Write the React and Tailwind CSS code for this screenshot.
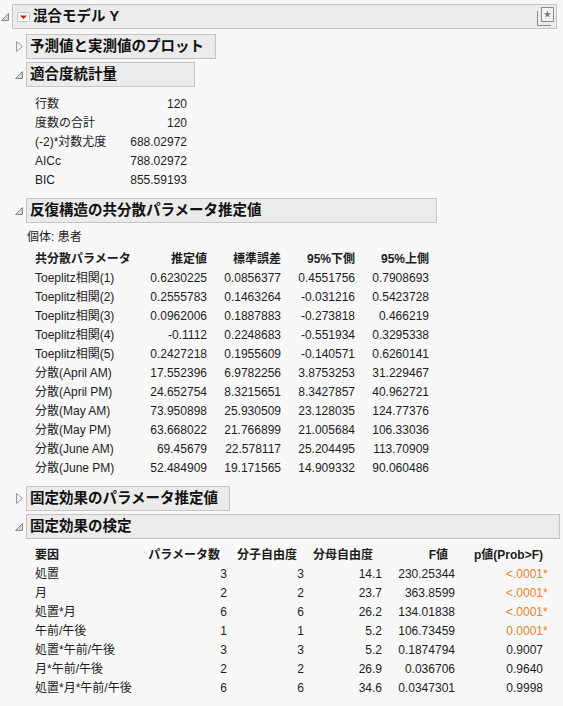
import React from "react";

const FONT = { fontFamily: '"Liberation Sans", "Noto Sans CJK JP", sans-serif' };

function OpenTri() {
  return (
    <svg width="8" height="8" viewBox="0 0 8 8" className="block">
      <path d="M7.5 0.5 L7.5 7.5 L0.5 7.5 Z" fill="#d4d4d4" stroke="#8a8a8a" strokeWidth="1" strokeLinejoin="round" />
    </svg>
  );
}

function ClosedTri() {
  return (
    <svg width="7" height="11" viewBox="0 0 7 11" className="block">
      <path d="M0.5 0.5 L6.5 5.5 L0.5 10.5 Z" fill="#f4f4f4" stroke="#9a9a9a" strokeWidth="1" strokeLinejoin="round" />
    </svg>
  );
}

function RedMenu() {
  return (
    <svg width="13" height="10" viewBox="0 0 13 10" className="block">
      <rect x="0.5" y="0.5" width="12" height="9" rx="1" fill="#fbfbfb" stroke="#c4c4c4" />
      <path d="M3 3.5 L10 3.5 L6.5 7 Z" fill="#d4141c" />
    </svg>
  );
}

function PinIcon() {
  return (
    <svg width="19" height="21" viewBox="0 0 19 21" className="block">
      <path d="M1.5 5 L1.5 19.5 L15 19.5" fill="none" stroke="#8c8c8c" strokeWidth="1" />
      <rect x="5.5" y="1.5" width="12" height="14" fill="#f2f2f2" stroke="#8c8c8c" />
      <path d="M11.5 4.6 L12.4 7.3 L15.1 7.3 L12.9 8.9 L13.7 11.5 L11.5 9.9 L9.3 11.5 L10.1 8.9 L7.9 7.3 L10.6 7.3 Z" fill="#7a7a7a" />
    </svg>
  );
}

function Section({ open, title, width, className = "" }) {
  return (
    <div className={`flex items-center ${className}`}>
      <div className="w-[14px] flex justify-end pr-[3px]">{open ? <OpenTri /> : <ClosedTri />}</div>
      <div
        className={`h-[25px] flex items-center pl-[3px] bg-[#ebebeb] border border-[#c4c4c4] text-[14.5px] font-bold text-[#111] ${width}`}
      >
        {title}
      </div>
    </div>
  );
}

const stats = [
  ["行数", "120"],
  ["度数の合計", "120"],
  ["(-2)*対数尤度", "688.02972"],
  ["AICc", "788.02972"],
  ["BIC", "855.59193"],
];

const cov = [
  ["Toeplitz相関(1)", "0.6230225", "0.0856377", "0.4551756", "0.7908693"],
  ["Toeplitz相関(2)", "0.2555783", "0.1463264", "-0.031216", "0.5423728"],
  ["Toeplitz相関(3)", "0.0962006", "0.1887883", "-0.273818", "0.466219"],
  ["Toeplitz相関(4)", "-0.1112", "0.2248683", "-0.551934", "0.3295338"],
  ["Toeplitz相関(5)", "0.2427218", "0.1955609", "-0.140571", "0.6260141"],
  ["分散(April AM)", "17.552396", "6.9782256", "3.8753253", "31.229467"],
  ["分散(April PM)", "24.652754", "8.3215651", "8.3427857", "40.962721"],
  ["分散(May AM)", "73.950898", "25.930509", "23.128035", "124.77376"],
  ["分散(May PM)", "63.668022", "21.766899", "21.005684", "106.33036"],
  ["分散(June AM)", "69.45679", "22.578117", "25.204495", "113.70909"],
  ["分散(June PM)", "52.484909", "19.171565", "14.909332", "90.060486"],
];

const fixed = [
  ["処置", "3", "3", "14.1", "230.25344", "<.0001", true],
  ["月", "2", "2", "23.7", "363.8599", "<.0001", true],
  ["処置*月", "6", "6", "26.2", "134.01838", "<.0001", true],
  ["午前/午後", "1", "1", "5.2", "106.73459", "0.0001", true],
  ["処置*午前/午後", "3", "3", "5.2", "0.1874794", "0.9007", false],
  ["月*午前/午後", "2", "2", "26.9", "0.036706", "0.9640", false],
  ["処置*月*午前/午後", "6", "6", "34.6", "0.0347301", "0.9998", false],
];

export default function App() {
  return (
    <div className="w-[563px] h-[706px] overflow-hidden bg-[#f8f8f8] text-[12px] text-[#1c1c1c]" style={FONT}>
      {/* top header */}
      <div className="flex items-center pt-[4px]">
        <div className="w-[12px] flex justify-end pr-[3px]">
          <OpenTri />
        </div>
        <div className="w-[545px] h-[25px] flex items-center bg-[#ebebeb] border border-[#c4c4c4] pl-[4px] pr-[1px]">
          <RedMenu />
          <span className="ml-[3px] text-[14.5px] font-bold text-[#111]">混合モデル Y</span>
          <div className="ml-auto">
            <PinIcon />
          </div>
        </div>
      </div>

      <div className="pl-[12px]">
        <Section open={false} title="予測値と実測値のプロット" width="w-[190px]" className="mt-[5px]" />
        <Section open title="適合度統計量" width="w-[169px]" className="mt-[3px]" />

        {/* fit statistics */}
        <div className="mt-[8px] ml-[23px] grid grid-cols-[80px_72px]">
          {stats.map(([k, v]) => (
            <React.Fragment key={k}>
              <div className="h-[19px] leading-[19px] whitespace-nowrap">{k}</div>
              <div className="h-[19px] leading-[19px] text-right">{v}</div>
            </React.Fragment>
          ))}
        </div>

        <Section open title="反復構造の共分散パラメータ推定値" width="w-[411px]" className="mt-[8px]" />
        <div className="mt-[5px] ml-[15px] h-[19px] leading-[19px]">個体: 患者</div>

        {/* covariance parameters */}
        <div className="mt-[3px] ml-[23px] grid grid-cols-[100px_72px_74px_74px_74px]">
          <div className="h-[19px] leading-[19px] font-bold whitespace-nowrap">共分散パラメータ</div>
          <div className="h-[19px] leading-[19px] font-bold text-right">推定値</div>
          <div className="h-[19px] leading-[19px] font-bold text-right">標準誤差</div>
          <div className="h-[19px] leading-[19px] font-bold text-right">95%下側</div>
          <div className="h-[19px] leading-[19px] font-bold text-right">95%上側</div>
          {cov.map((r) => (
            <React.Fragment key={r[0]}>
              <div className="h-[19px] leading-[19px] whitespace-nowrap">{r[0]}</div>
              <div className="h-[19px] leading-[19px] text-right">{r[1]}</div>
              <div className="h-[19px] leading-[19px] text-right">{r[2]}</div>
              <div className="h-[19px] leading-[19px] text-right">{r[3]}</div>
              <div className="h-[19px] leading-[19px] text-right">{r[4]}</div>
            </React.Fragment>
          ))}
        </div>

        <Section open={false} title="固定効果のパラメータ推定値" width="w-[204px]" className="mt-[8px]" />
        <Section open title="固定効果の検定" width="w-[534px]" className="mt-[3px]" />

        {/* fixed effects tests */}
        <div className="mt-[7px] ml-[23px] grid grid-cols-[100px_92px_77px_78px_73px_96px]">
          <div className="h-[19px] leading-[19px] font-bold">要因</div>
          <div className="h-[19px] leading-[19px] font-bold text-right pr-[7px] whitespace-nowrap">パラメータ数</div>
          <div className="h-[19px] leading-[19px] font-bold text-right pr-[7px] whitespace-nowrap">分子自由度</div>
          <div className="h-[19px] leading-[19px] font-bold text-right pr-[9px] whitespace-nowrap">分母自由度</div>
          <div className="h-[19px] leading-[19px] font-bold text-right pr-[7px]">F値</div>
          <div className="h-[19px] leading-[19px] font-bold text-right pr-[8px] whitespace-nowrap">p値(Prob&gt;F)</div>
          {fixed.map((r) => (
            <React.Fragment key={r[0]}>
              <div className="h-[19px] leading-[19px] whitespace-nowrap">{r[0]}</div>
              <div className="h-[19px] leading-[19px] text-right">{r[1]}</div>
              <div className="h-[19px] leading-[19px] text-right">{r[2]}</div>
              <div className="h-[19px] leading-[19px] text-right">{r[3]}</div>
              <div className="h-[19px] leading-[19px] text-right">{r[4]}</div>
              <div className={`h-[19px] leading-[19px] flex justify-end ${r[6] ? "text-[#ee8123]" : ""}`}>
                <span>{r[5]}</span>
                <span className="w-[8px] text-left">{r[6] ? "*" : ""}</span>
              </div>
            </React.Fragment>
          ))}
        </div>
      </div>
    </div>
  );
}
